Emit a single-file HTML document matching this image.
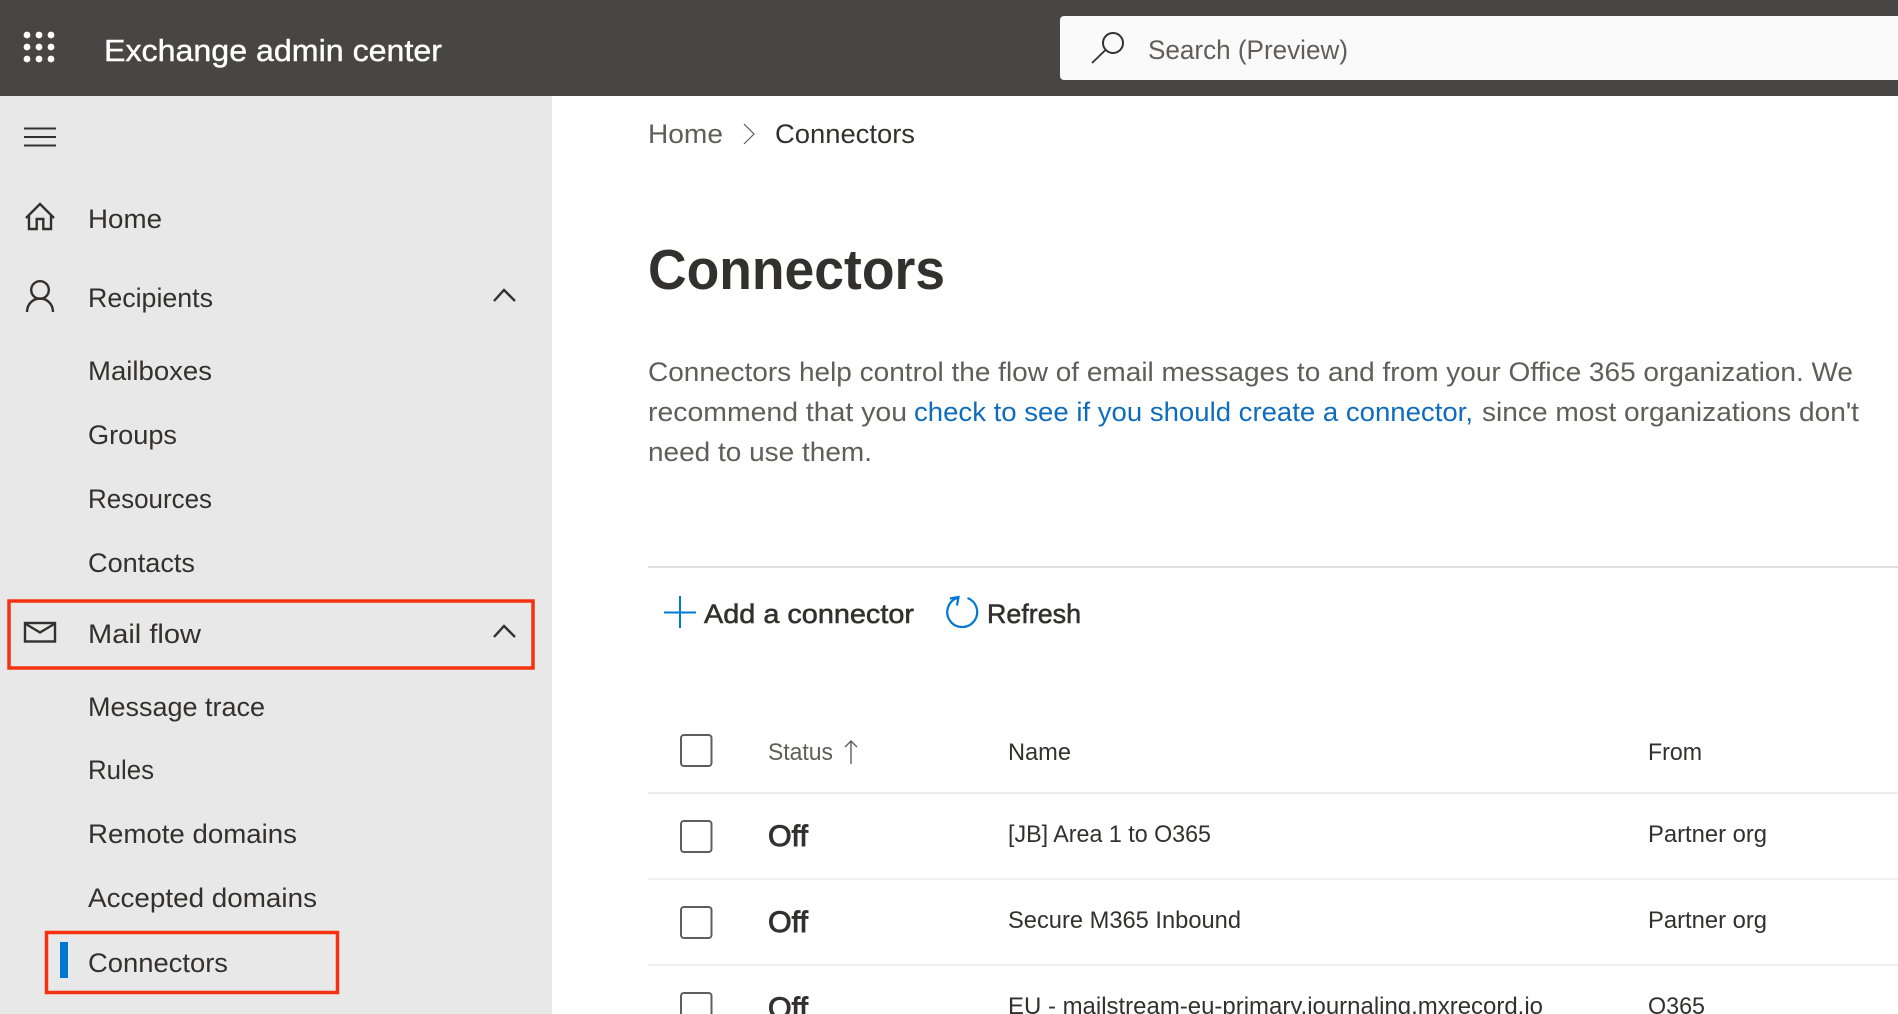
<!DOCTYPE html>
<html lang="en">
<head>
<meta charset="utf-8">
<title>Connectors - Exchange admin center</title>
<style>
html,body{margin:0;padding:0;background:#fff;width:1898px;height:1014px;overflow:hidden}
svg{display:block}
text{font-family:"Liberation Sans",sans-serif;font-size:27px;fill:#323130}
.semi{stroke:#323130;stroke-width:.55px}
.off{stroke:#323130;stroke-width:.95px;font-size:30px}
.g{fill:#605e5c}
.icon{fill:none;stroke:#323130;stroke-width:2.4}
</style>
</head>
<body>
<svg width="1898" height="1014" viewBox="0 0 1898 1014" xmlns="http://www.w3.org/2000/svg">
<rect width="1898" height="1014" fill="#fff"/>
<!-- top bar -->
<rect width="1898" height="96" fill="#484644"/>
<g fill="#fff">
<circle cx="27" cy="35" r="3.400"/><circle cx="39" cy="35" r="3.400"/><circle cx="51" cy="35" r="3.400"/>
<circle cx="27" cy="47" r="3.400"/><circle cx="39" cy="47" r="3.400"/><circle cx="51" cy="47" r="3.400"/>
<circle cx="27" cy="59" r="3.400"/><circle cx="39" cy="59" r="3.400"/><circle cx="51" cy="59" r="3.400"/>
</g>
<text x="104" y="61" style="font-size:31px;fill:#fff;stroke:#fff;stroke-width:.4px" textLength="338" lengthAdjust="spacingAndGlyphs">Exchange admin center</text>
<path d="M1064 16H1898V80H1064a4 4 0 0 1-4-4V20a4 4 0 0 1 4-4z" fill="#fafafa"/>
<circle cx="1113" cy="43" r="10" fill="none" stroke="#323130" stroke-width="2"/>
<path d="M1105.500 50L1092 63" stroke="#323130" stroke-width="1.800" fill="none"/>
<text class="g" x="1148" y="59" textLength="200" lengthAdjust="spacingAndGlyphs">Search (Preview)</text>

<!-- sidebar -->
<rect x="0" y="96" width="552" height="918" fill="#e8e8e8"/>
<path d="M24 128.500H56M24 137H56M24 145.500H56" stroke="#333" stroke-width="2" fill="none"/>
<path class="icon" d="M26 218L40 204L54 218M29 215V229H36.700V219H43.300V229H51V215"/>
<circle class="icon" cx="40" cy="290" r="8.800"/>
<path class="icon" d="M27 312C27 304 33 298.500 40 298.500C47 298.500 53 304 53 312"/>
<path class="icon" d="M494 301L504 290L515 301"/>
<text x="88" y="228" textLength="74" lengthAdjust="spacingAndGlyphs">Home</text>
<text x="88" y="307" textLength="125" lengthAdjust="spacingAndGlyphs">Recipients</text>
<text x="88" y="380" textLength="124" lengthAdjust="spacingAndGlyphs">Mailboxes</text>
<text x="88" y="444" textLength="89" lengthAdjust="spacingAndGlyphs">Groups</text>
<text x="88" y="508" textLength="124" lengthAdjust="spacingAndGlyphs">Resources</text>
<text x="88" y="572" textLength="107" lengthAdjust="spacingAndGlyphs">Contacts</text>

<rect x="25" y="623" width="30" height="18.500" class="icon"/>
<path class="icon" d="M25 623.500L40 632.500L55 623.500"/>
<path class="icon" d="M494 637L504 626L515 637"/>
<text x="88" y="643" textLength="113" lengthAdjust="spacingAndGlyphs">Mail flow</text>
<text x="88" y="716" textLength="177" lengthAdjust="spacingAndGlyphs">Message trace</text>
<text x="88" y="779" textLength="66" lengthAdjust="spacingAndGlyphs">Rules</text>
<text x="88" y="843" textLength="209" lengthAdjust="spacingAndGlyphs">Remote domains</text>
<text x="88" y="907" textLength="229" lengthAdjust="spacingAndGlyphs">Accepted domains</text>
<text x="88" y="972" textLength="140" lengthAdjust="spacingAndGlyphs">Connectors</text>
<rect x="60" y="942" width="8" height="36" fill="#0078d4"/>
<rect x="9" y="601" width="524" height="67" fill="none" stroke="#f5320f" stroke-width="3.500"/>
<rect x="46.500" y="932.500" width="291" height="60" fill="none" stroke="#f5320f" stroke-width="3.500"/>

<!-- breadcrumb -->
<text class="g" x="648" y="143" textLength="75" lengthAdjust="spacingAndGlyphs">Home</text>
<path d="M744 124L754 134L744 144" fill="none" stroke="#605e5c" stroke-width="1.200"/>
<text x="775" y="143" textLength="140" lengthAdjust="spacingAndGlyphs">Connectors</text>

<!-- heading -->
<text x="648" y="289" style="font-size:57px;font-weight:700" textLength="297" lengthAdjust="spacingAndGlyphs">Connectors</text>

<!-- intro -->
<text class="g" x="648" y="381" textLength="1205" lengthAdjust="spacingAndGlyphs">Connectors help control the flow of email messages to and from your Office 365 organization. We</text>
<text class="g" x="648" y="421" textLength="259" lengthAdjust="spacingAndGlyphs">recommend that you</text>
<text x="914" y="421" style="fill:#0f6cbd" textLength="559" lengthAdjust="spacingAndGlyphs">check to see if you should create a connector,</text>
<text class="g" x="1482" y="421" textLength="377" lengthAdjust="spacingAndGlyphs">since most organizations don't</text>
<text class="g" x="648" y="461" textLength="224" lengthAdjust="spacingAndGlyphs">need to use them.</text>

<rect x="648" y="566" width="1250" height="2" fill="#e1e1e1"/>

<!-- command bar -->
<path d="M664 612.500H696M680 596V628" stroke="#0078d4" stroke-width="2" fill="none"/>
<text class="semi" x="704" y="623" textLength="210" lengthAdjust="spacingAndGlyphs">Add a connector</text>
<path d="M957.500 597.800A15 15 0 1 0 967.500 598" fill="none" stroke="#0078d4" stroke-width="2.200"/>
<path d="M950 598.500L958.500 597L957 605.500" fill="none" stroke="#0078d4" stroke-width="2.200"/>
<text class="semi" x="987" y="623" textLength="94" lengthAdjust="spacingAndGlyphs">Refresh</text>

<!-- table -->
<g fill="none" stroke="#605e5c" stroke-width="2">
<rect x="681" y="735" width="30.500" height="31" rx="3"/>
<rect x="681" y="821" width="30.500" height="31" rx="3"/>
<rect x="681" y="907" width="30.500" height="31" rx="3"/>
<rect x="681" y="993" width="30.500" height="31" rx="3"/>
</g>
<text class="g" style="font-size:24px" x="768" y="760" textLength="65" lengthAdjust="spacingAndGlyphs">Status</text>
<path d="M851 764V741M845 747L851 741L857 747" fill="none" stroke="#605e5c" stroke-width="1.400"/>
<text style="font-size:24px" x="1008" y="760" textLength="63" lengthAdjust="spacingAndGlyphs">Name</text>
<text style="font-size:24px" x="1648" y="760" textLength="54" lengthAdjust="spacingAndGlyphs">From</text>
<rect x="648" y="792" width="1250" height="2" fill="#ededed"/>
<rect x="648" y="878" width="1250" height="2" fill="#f0f0f0"/>
<rect x="648" y="964" width="1250" height="2" fill="#f0f0f0"/>

<text class="off" x="768" y="846" textLength="40" lengthAdjust="spacingAndGlyphs">Off</text>
<text class="off" x="768" y="932" textLength="40" lengthAdjust="spacingAndGlyphs">Off</text>
<text class="off" x="768" y="1018" textLength="40" lengthAdjust="spacingAndGlyphs">Off</text>

<text style="font-size:24px" x="1008" y="842" textLength="203" lengthAdjust="spacingAndGlyphs">[JB] Area 1 to O365</text>
<text style="font-size:24px" x="1008" y="928" textLength="233" lengthAdjust="spacingAndGlyphs">Secure M365 Inbound</text>
<text style="font-size:24px" x="1008" y="1014" textLength="535" lengthAdjust="spacingAndGlyphs">EU - mailstream-eu-primary.journaling.mxrecord.io</text>

<text style="font-size:24px" x="1648" y="842" textLength="119" lengthAdjust="spacingAndGlyphs">Partner org</text>
<text style="font-size:24px" x="1648" y="928" textLength="119" lengthAdjust="spacingAndGlyphs">Partner org</text>
<text style="font-size:24px" x="1648" y="1014" textLength="57" lengthAdjust="spacingAndGlyphs">O365</text>
</svg>
</body>
</html>
